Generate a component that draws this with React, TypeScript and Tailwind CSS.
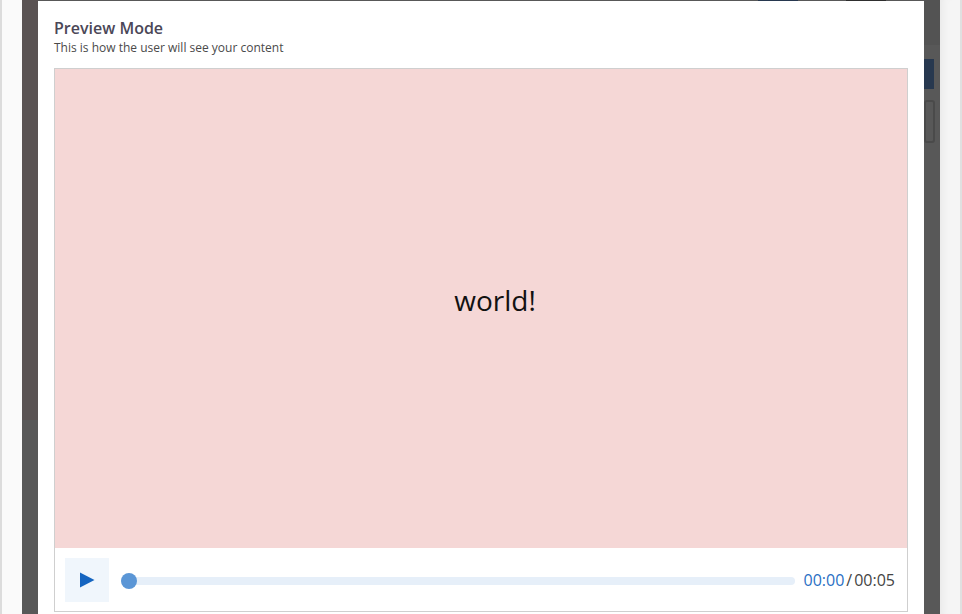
const font = { fontFamily: '"Open Sans", "Noto Sans", sans-serif' };

function PreviewPlayer() {
  return (
    <div className="mt-[12px] border border-[#cfcfcf]">
      <div className="h-[479px] bg-[#f5d7d6] flex items-center justify-center pl-[28px] pb-[17px]">
        <span className="text-[28px] text-[#111]">world!</span>
      </div>
      <div className="h-[63px] bg-white flex items-center pl-[10px] pr-[12px]">
        <button
          type="button"
          className="w-[44px] h-[44px] bg-[#f0f6fc] flex items-center justify-center"
        >
          <svg width="16" height="16" viewBox="0 0 16 16">
            <path d="M1 0.5 L15.5 8 L1 15.5 Z" fill="#1565c0" />
          </svg>
        </button>
        <div className="flex-1 ml-[12px] mr-[9px] mt-[3px] relative h-[16px] flex items-center">
          <div className="w-full h-[8px] rounded-full bg-[#e6eff9]" />
          <div className="absolute left-0 top-0 w-[16px] h-[16px] rounded-full bg-[#5b96d6]" />
        </div>
        <div className="text-[16px] flex items-center">
          <span className="text-[#2a6fc4]">00:00</span>
          <span className="text-[#444] mx-[2px]">/</span>
          <span className="text-[#444]">00:05</span>
        </div>
      </div>
    </div>
  );
}

export default function App() {
  return (
    <div className="w-[962px] h-[614px] overflow-hidden flex bg-[#f7f7f7]" style={font}>
      <div className="w-[22px] h-full bg-[#fafafa] border-l-2 border-[#dcdcdc]" />
      <div className="w-[918px] h-full relative bg-[#585858]">
        {/* page behind the overlay */}
        <div className="absolute left-0 top-0 w-[16px] h-[420px] bg-[#5a5353]" />
        <div className="absolute right-0 top-0 w-[16px] h-[45px] bg-[#535353]" />
        <div className="absolute right-[6px] top-[59px] w-[10px] h-[30px] bg-[#27384f]" />
        <div className="absolute right-[5px] top-[100px] w-[11px] h-[43px] border-2 border-[#4a4a4a] rounded-[3px]" />
        <div className="absolute left-[736px] top-0 w-[40px] h-[1px] bg-[#27384f]" />
        <div className="absolute left-[824px] top-0 w-[40px] h-[1px] bg-[#2e2e2e]" />

        <div className="absolute left-[16px] right-[16px] top-[1px] bottom-0 bg-white px-[16px] pt-[16px]">
          <div className="text-[16px] leading-[22px] font-semibold text-[#4b4757]">Preview Mode</div>
          <div className="mt-[1px] text-[12px] leading-[16px] text-[#4a4a4a]">
            This is how the user will see your content
          </div>
          <PreviewPlayer />
        </div>
      </div>
      <div className="flex-1 h-full bg-[#f5f5f5] border-r-2 border-[#e0e0e0] shadow-[inset_8px_0_8px_-6px_rgba(0,0,0,0.06)]" />
    </div>
  );
}
